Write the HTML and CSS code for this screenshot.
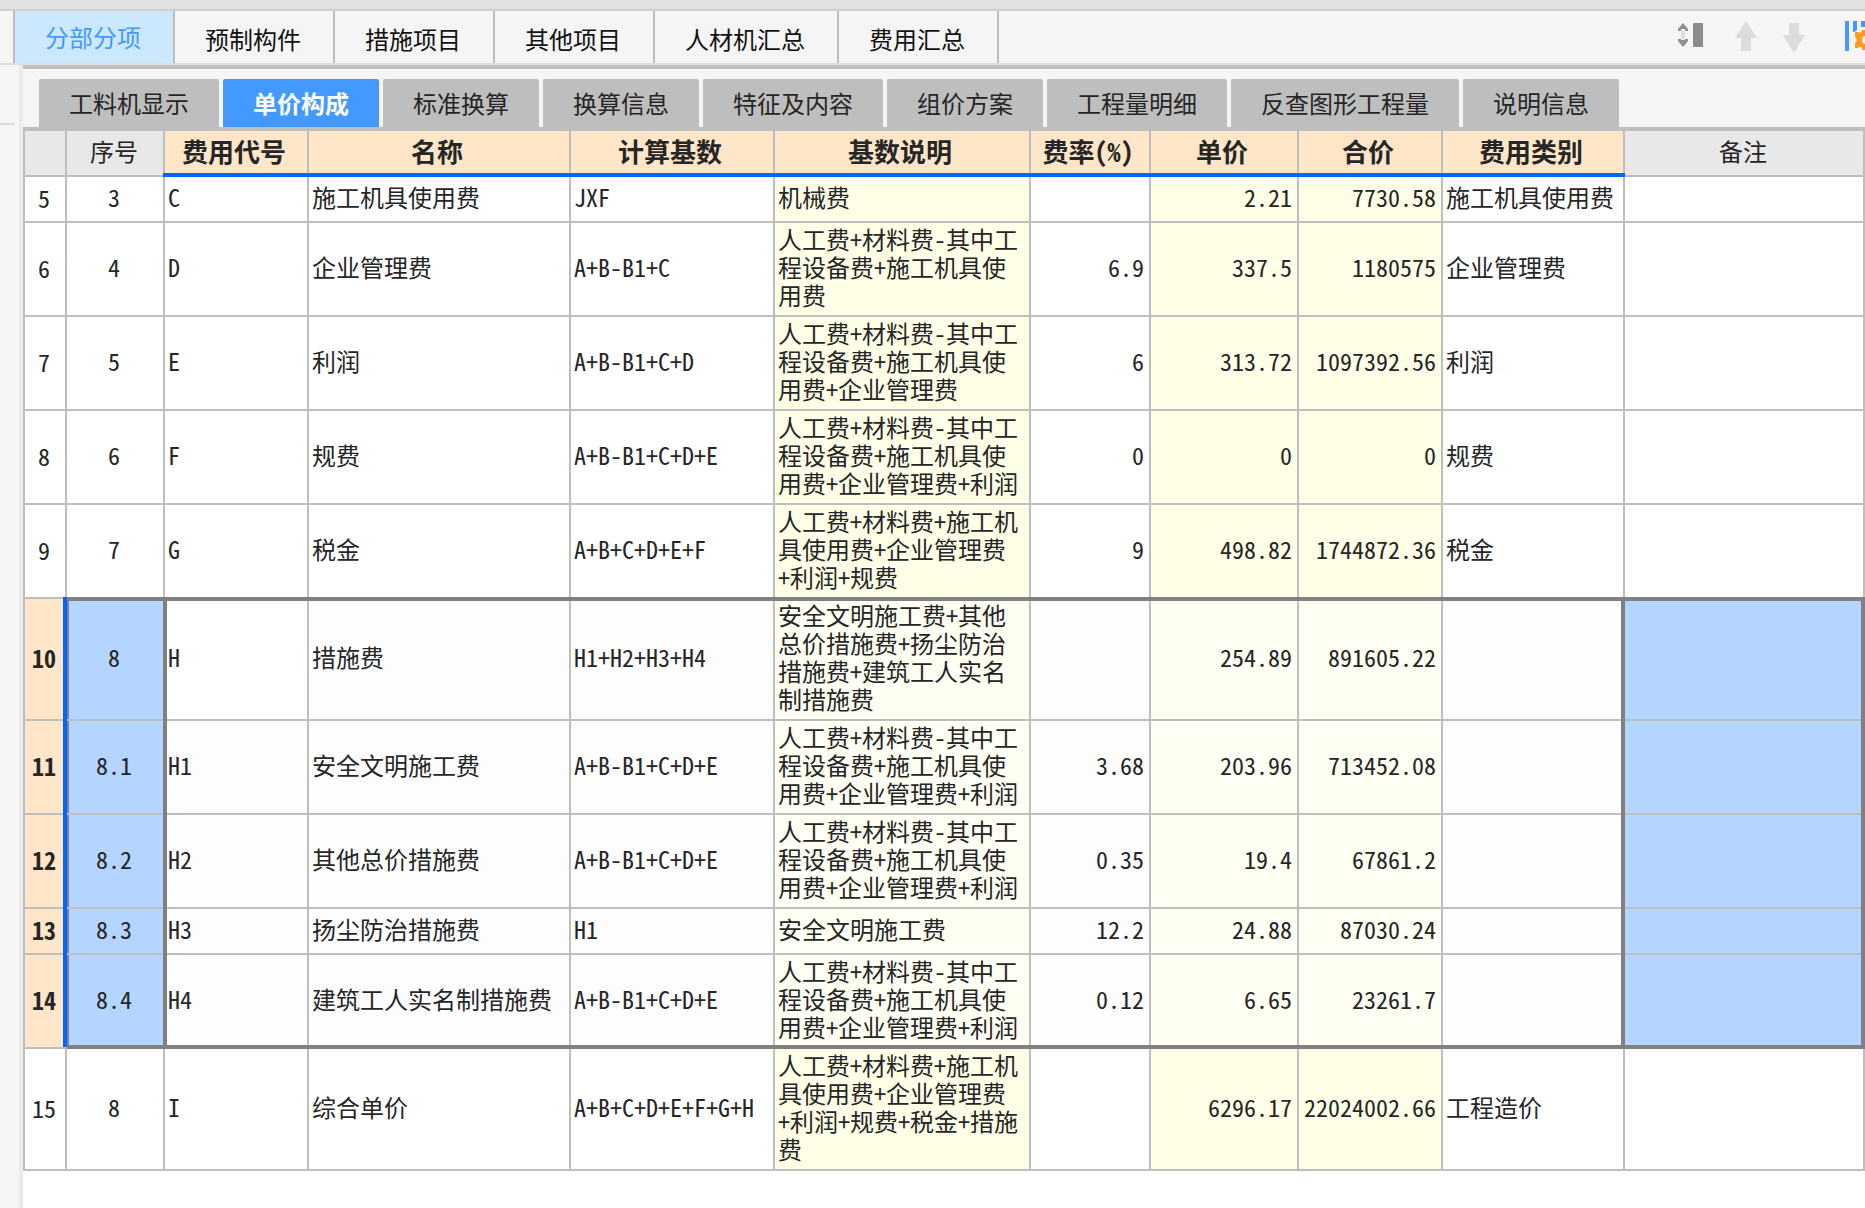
FILE: index.html
```html
<!DOCTYPE html>
<html lang="zh-CN">
<head>
<meta charset="utf-8">
<meta name="viewport" content="width=device-width, initial-scale=1">
<title>单价构成</title>
<link rel="stylesheet" href="styles.css">
</head>
<body>
<div class="window-edge"></div>
<header class="topbar">
  <nav class="main-tabs">
    <button class="main-tab is-active" type="button">分部分项</button>
    <button class="main-tab" type="button">预制构件</button>
    <button class="main-tab" type="button">措施项目</button>
    <button class="main-tab" type="button">其他项目</button>
    <button class="main-tab" type="button">人材机汇总</button>
    <button class="main-tab" type="button">费用汇总</button>
  </nav>
  <div class="tools">
    <button class="tool" type="button" aria-label="行高">
      <svg width="28" height="32" viewBox="0 0 28 32"><path d="M7 2l5 6v2H9V8H5v2H2V8z" fill="#8f8f8f"/><path d="M5 10h4v8H5z" fill="#dedede"/><path d="M2 18h3v1h4v-1h3v2l-5 6-5-6z" fill="#8f8f8f"/><rect x="17" y="2" width="10" height="24" rx="1" fill="#8c8c8c"/></svg>
    </button>
    <button class="tool" type="button" aria-label="上移">
      <svg width="24" height="32" viewBox="0 0 24 32"><path d="M12 0l11 17h-6v13H7V17H1z" fill="#dcdcdc"/></svg>
    </button>
    <button class="tool" type="button" aria-label="下移">
      <svg width="24" height="32" viewBox="0 0 24 32"><path d="M7 2h10v12h6L12 32 1 14h6z" fill="#dcdcdc"/></svg>
    </button>
    <button class="tool" type="button" aria-label="列设置">
      <svg width="20" height="32" viewBox="0 0 20 32"><path d="M0 0h4v30H0zM8 0h4v9l-3 2H8zM16 0h4v6h-4z" fill="#4499ff"/><path d="M17 9h6v20h-6v-3h-3l-1 1h-3v-5l2-3-2-3v-5h4l2 1z" fill="#ff9a1f"/><circle cx="21" cy="19" r="4" fill="#f5f5f5"/></svg>
    </button>
  </div>
</header>
<div class="workspace">
  <aside class="rail"><hr class="rail-line"></aside>
  <main class="panel">
    <nav class="sub-tabs">
      <button class="sub-tab" type="button">工料机显示</button>
      <button class="sub-tab is-active" type="button">单价构成</button>
      <button class="sub-tab" type="button">标准换算</button>
      <button class="sub-tab" type="button">换算信息</button>
      <button class="sub-tab" type="button">特征及内容</button>
      <button class="sub-tab" type="button">组价方案</button>
      <button class="sub-tab" type="button">工程量明细</button>
      <button class="sub-tab" type="button">反查图形工程量</button>
      <button class="sub-tab" type="button">说明信息</button>
    </nav>
    <table class="grid">
      <colgroup>
        <col class="w-row"><col class="w-seq"><col class="w-code"><col class="w-name"><col class="w-base"><col class="w-desc"><col class="w-rate"><col class="w-price"><col class="w-total"><col class="w-kind"><col>
      </colgroup>
      <thead>
        <tr><th></th><th scope="col">序号</th><th class="hot" scope="col">费用代号</th><th class="hot" scope="col">名称</th><th class="hot" scope="col">计算基数</th><th class="hot" scope="col">基数说明</th><th class="hot" scope="col">费率(%)</th><th class="hot" scope="col">单价</th><th class="hot" scope="col">合价</th><th class="hot" scope="col">费用类别</th><th scope="col">备注</th></tr>
      </thead>
      <tbody>
        <tr><th scope="row">5</th><td class="seq">3</td><td>C</td><td>施工机具使用费</td><td>JXF</td><td class="calc">机械费</td><td class="num"></td><td class="num calc">2.21</td><td class="num calc">7730.58</td><td>施工机具使用费</td><td></td></tr>
        <tr><th scope="row">6</th><td class="seq">4</td><td>D</td><td>企业管理费</td><td>A+B-B1+C</td><td class="calc">人工费+材料费-其中工程设备费+施工机具使用费</td><td class="num">6.9</td><td class="num calc">337.5</td><td class="num calc">1180575</td><td>企业管理费</td><td></td></tr>
        <tr><th scope="row">7</th><td class="seq">5</td><td>E</td><td>利润</td><td>A+B-B1+C+D</td><td class="calc">人工费+材料费-其中工程设备费+施工机具使用费+企业管理费</td><td class="num">6</td><td class="num calc">313.72</td><td class="num calc">1097392.56</td><td>利润</td><td></td></tr>
        <tr><th scope="row">8</th><td class="seq">6</td><td>F</td><td>规费</td><td>A+B-B1+C+D+E</td><td class="calc">人工费+材料费-其中工程设备费+施工机具使用费+企业管理费+利润</td><td class="num">0</td><td class="num calc">0</td><td class="num calc">0</td><td>规费</td><td></td></tr>
        <tr><th scope="row">9</th><td class="seq">7</td><td>G</td><td>税金</td><td>A+B+C+D+E+F</td><td class="calc">人工费+材料费+施工机具使用费+企业管理费+利润+规费</td><td class="num">9</td><td class="num calc">498.82</td><td class="num calc">1744872.36</td><td>税金</td><td></td></tr>
        <tr class="sel sel-first"><th scope="row">10</th><td class="seq pick">8</td><td class="current">H</td><td>措施费</td><td>H1+H2+H3+H4</td><td class="calc">安全文明施工费+其他总价措施费+扬尘防治措施费+建筑工人实名制措施费</td><td class="num"></td><td class="num calc">254.89</td><td class="num calc">891605.22</td><td></td><td class="pick"></td></tr>
        <tr class="sel"><th scope="row">11</th><td class="seq pick">8.1</td><td>H1</td><td>安全文明施工费</td><td>A+B-B1+C+D+E</td><td class="calc">人工费+材料费-其中工程设备费+施工机具使用费+企业管理费+利润</td><td class="num">3.68</td><td class="num calc">203.96</td><td class="num calc">713452.08</td><td></td><td class="pick"></td></tr>
        <tr class="sel"><th scope="row">12</th><td class="seq pick">8.2</td><td>H2</td><td>其他总价措施费</td><td>A+B-B1+C+D+E</td><td class="calc">人工费+材料费-其中工程设备费+施工机具使用费+企业管理费+利润</td><td class="num">0.35</td><td class="num calc">19.4</td><td class="num calc">67861.2</td><td></td><td class="pick"></td></tr>
        <tr class="sel"><th scope="row">13</th><td class="seq pick">8.3</td><td>H3</td><td>扬尘防治措施费</td><td>H1</td><td class="calc">安全文明施工费</td><td class="num">12.2</td><td class="num calc">24.88</td><td class="num calc">87030.24</td><td></td><td class="pick"></td></tr>
        <tr class="sel sel-last"><th scope="row">14</th><td class="seq pick">8.4</td><td>H4</td><td>建筑工人实名制措施费</td><td>A+B-B1+C+D+E</td><td class="calc">人工费+材料费-其中工程设备费+施工机具使用费+企业管理费+利润</td><td class="num">0.12</td><td class="num calc">6.65</td><td class="num calc">23261.7</td><td></td><td class="pick"></td></tr>
        <tr><th scope="row">15</th><td class="seq">8</td><td>I</td><td>综合单价</td><td>A+B+C+D+E+F+G+H</td><td class="calc">人工费+材料费+施工机具使用费+企业管理费+利润+规费+税金+措施费</td><td class="num"></td><td class="num calc">6296.17</td><td class="num calc">22024002.66</td><td>工程造价</td><td></td></tr>
      </tbody>
    </table>
  </main>
</div>
</body>
</html>
```

FILE: styles.css
```css
:root {
  --line: #bebebe;
  --frame: #808080;
  --blue: #0066ff;
  --ink: #262626;
  --paper: #f5f5f5;
}

* { box-sizing: border-box; }

body {
  margin: 0;
  min-height: 100vh;
  display: flex;
  flex-direction: column;
  background: #fff;
  color: var(--ink);
  font: 24px/28px "Noto Sans CJK SC", sans-serif;
}

button {
  border: 0;
  margin: 0;
  padding: 0;
  background: none;
  font: inherit;
  color: inherit;
}

.window-edge {
  height: 11px;
  background: #e1e1e1;
  border-bottom: 2px solid #d0d0d0;
}

.topbar {
  display: flex;
  justify-content: space-between;
  height: 54px;
  background: var(--paper);
  border-bottom: 2px solid #dedede;
}

.main-tabs {
  display: flex;
  margin-left: 13px;
  border-left: 2px solid var(--line);
}

.main-tab {
  padding: 4px 32px 0 30px;
  border-right: 2px solid var(--line);
  color: #111;
  white-space: nowrap;
}

.main-tab.is-active {
  padding-top: 0;
  background: #cce8ff;
  color: #4499ff;
}

.tools {
  display: flex;
  align-items: center;
  gap: 24px;
}

.tool { display: flex; }
.tool:first-child { margin-right: 6px; }
.tool:last-child { margin-left: 15px; }

.workspace {
  flex: 1;
  display: flex;
}

.rail {
  flex: none;
  width: 23px;
  background: var(--paper);
  border-right: 4px solid #ebebeb;
}

.rail-line {
  width: 15px;
  height: 2px;
  margin: 58px 0 0;
  border: 0;
  background: #dedede;
}

.panel {
  flex: 1;
  min-width: 0;
  border-top: 4px solid var(--line);
}

.sub-tabs {
  display: flex;
  gap: 4px;
  padding: 10px 16px 0;
  background: var(--paper);
  border-bottom: 4px solid var(--line);
}

.sub-tab {
  height: 48px;
  padding: 0 30px;
  border-radius: 2px 2px 0 0;
  background: var(--line);
  white-space: nowrap;
}

.sub-tab.is-active {
  background: #4499ff;
  color: #fff;
  font-weight: 700;
}

.grid {
  width: 100%;
  table-layout: fixed;
  border-collapse: separate;
  border-spacing: 0;
  border-left: 2px solid var(--line);
  font-feature-settings: "hwid";
}

.w-row { width: 42px; }
.w-seq { width: 98px; }
.w-code { width: 144px; }
.w-name { width: 262px; }
.w-base { width: 204px; }
.w-desc { width: 256px; }
.w-rate { width: 120px; }
.w-price { width: 148px; }
.w-total { width: 144px; }
.w-kind { width: 182px; }

.grid th,
.grid td {
  position: relative;
  height: 46px;
  padding: 2px 5px 6px 3px;
  border-right: 2px solid var(--line);
  border-bottom: 2px solid var(--line);
  text-align: left;
  vertical-align: middle;
  font-weight: 400;
}

.grid th {
  padding: 3px 2px 5px 0;
  text-align: center;
}

.grid thead th {
  padding: 2px 2px 6px 0;
  background: #e8e8e8;
}

.grid thead .hot {
  padding-right: 4px;
  background: #ffe6c8;
  font-size: 26px;
  font-weight: 700;
}

/* rule under the headings of the selected columns */
.hot::after {
  content: "";
  position: absolute;
  left: -2px;
  right: -2px;
  bottom: -2px;
  height: 4px;
  background: var(--blue);
}

.grid .seq { text-align: center; }
.grid .num { text-align: right; }
.grid .calc { background: #ffffe8; }

.grid .sel td { background: #fdfdfd; }
.grid .sel .calc { background: #fffff4; }
.grid .sel .current { background: #fff; }
.grid .sel .pick { background: #b3d5ff; }

.grid .sel th {
  background: #ffe6c8;
  font-weight: 700;
}

/* vertical sides of the selection frame */
.sel th::after,
.sel .pick::after {
  content: "";
  position: absolute;
  z-index: 2;
  top: -2px;
  bottom: -2px;
  right: -2px;
  width: 4px;
  background: var(--blue);
}

.sel .pick::after {
  z-index: 1;
  background: var(--frame);
}

.sel-last th::after { bottom: 0; }

.sel .seq.pick::after { right: -4px; }
.sel .seq.pick { box-shadow: inset 2px 0 var(--frame); }

.sel .pick:last-child { box-shadow: -4px 0 var(--frame); }

/* top and bottom of the selection frame */
.sel-first td::before,
.sel-last td::before {
  content: "";
  position: absolute;
  z-index: 1;
  left: 0;
  right: -2px;
  height: 4px;
  background: var(--frame);
}

.sel-first td::before { top: -2px; }
.sel-last td::before { bottom: -2px; }
```
